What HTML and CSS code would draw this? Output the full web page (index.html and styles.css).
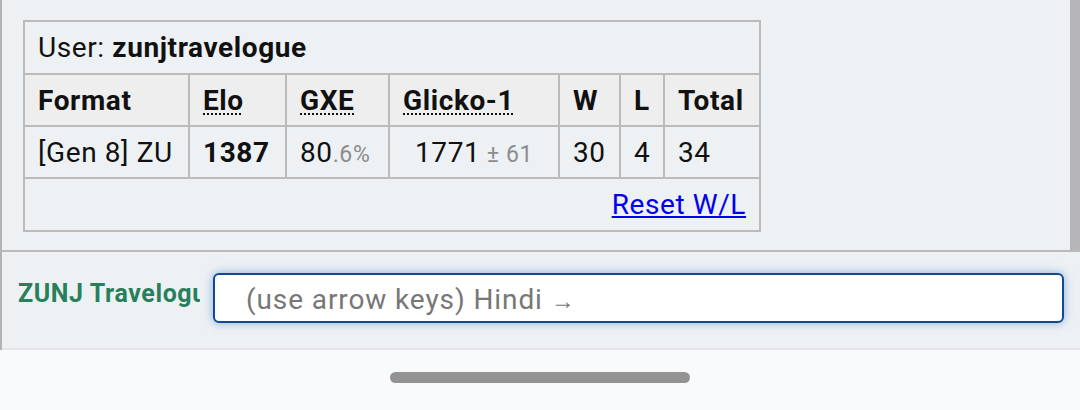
FILE: index.html
```html
<!DOCTYPE html>
<html lang="en">
  <head>
    <meta charset="UTF-8" />
    <meta name="viewport" content="width=device-width, initial-scale=1.0" />
    <title>Ladder</title>
    <link rel="stylesheet" href="styles.css">
  </head>
  <body>
    <div class="room">
      <div class="log">
        <div class="log-inner">
          <table class="ladder">
            <colgroup>
              <col class="c-format" />
              <col class="c-elo" />
              <col class="c-gxe" />
              <col class="c-glicko" />
              <col class="c-w" />
              <col class="c-l" />
              <col class="c-total" />
            </colgroup>
            <tr class="row-user">
              <td colspan="7">User: <strong>zunjtravelogue</strong></td>
            </tr>
            <tr class="row-head">
              <th>Format</th>
              <th><abbr title="Elo rating">Elo</abbr></th>
              <th><abbr title="user's percentage chance of winning a random battle (aka GLIXARE)">GXE</abbr></th>
              <th><abbr title="Glicko-1 rating: rating ± deviation">Glicko-1</abbr></th>
              <th>W</th>
              <th>L</th>
              <th>Total</th>
            </tr>
            <tr class="row-data">
              <td>[Gen 8] ZU</td>
              <td><strong>1387</strong></td>
              <td>80<small>.6%</small></td>
              <td class="center">1771<small> ± 61</small></td>
              <td>30</td>
              <td>4</td>
              <td>34</td>
            </tr>
            <tr class="row-reset">
              <td colspan="7" class="right"><a href="#">Reset W/L</a></td>
            </tr>
          </table>
        </div>
        <div class="scrollbar"></div>
      </div>
      <div class="chatbox">
        <div class="name">ZUNJ Travelogue</div>
        <div class="textbox">
          <span class="hint">(use arrow keys) Hindi <small>→</small></span>
        </div>
      </div>
    </div>
    <div class="navbar">
      <div class="pill"></div>
    </div>
  </body>
</html>
```

FILE: styles.css
```css
body {
  margin: 0;
  background-color: #f9fafc;
  font-family: Roboto, "Noto Sans", Arial, sans-serif;
  color: #111;
}

.room {
  border-left: 2px solid #b3b3b3;
  background-color: #edf1f4;
}

.log {
  display: flex;
  height: 250px;
  border-bottom: 2px solid #bababa;
}

.log-inner {
  flex: 1;
  padding: 20px 0 0 21px;
  overflow: hidden;
}

.scrollbar {
  width: 10px;
  background-color: #b6b6b8;
}

.ladder {
  border-collapse: collapse;
  table-layout: fixed;
  width: 736px;
  font-size: 28px;
  letter-spacing: 0.6px;
}

.c-format { width: 165px; }
.c-elo { width: 97px; }
.c-gxe { width: 103px; }
.c-glicko { width: 170px; }
.c-w { width: 61px; }
.c-l { width: 44px; }
.c-total { width: 96px; }

.ladder td,
.ladder th {
  border: 2px solid #bbb;
  padding: 0 13px;
  text-align: left;
  white-space: nowrap;
}

.ladder th {
  background-color: #eee;
  font-weight: bold;
}

.ladder abbr {
  text-decoration: underline dotted;
  text-decoration-thickness: 2px;
  text-underline-offset: 4px;
}

.ladder small {
  font-size: 23px;
  color: #8c8c8c;
}

.row-user { height: 53px; }
.row-head { height: 52px; }
.row-data { height: 52px; }
.row-reset { height: 53px; }

.ladder .center {
  text-align: center;
}

.ladder .right {
  text-align: right;
}

.ladder a {
  color: #0000ee;
}

.chatbox {
  display: flex;
  height: 98px;
  padding: 21px 16px 0 16px;
  box-sizing: border-box;
  border-bottom: 2px solid #e1e5ea;
}

.name {
  width: 182px;
  margin-right: 13px;
  padding-top: 6px;
  overflow: hidden;
  white-space: nowrap;
  font-size: 25px;
  font-weight: bold;
  letter-spacing: 0.6px;
  color: #27805b;
}

.textbox {
  flex: 1;
  height: 50px;
  box-sizing: border-box;
  border: 2px solid #124a92;
  border-radius: 6px;
  background-color: #fff;
  box-shadow: 0 0 10px rgba(40, 110, 200, 0.5);
  padding: 2px 0 0 31px;
  display: flex;
  align-items: center;
}

.hint {
  font-size: 28px;
  letter-spacing: 0.9px;
  color: #777;
}

.hint small {
  font-size: 24px;
}

.navbar {
  height: 58px;
  display: flex;
  justify-content: center;
  padding-top: 22px;
  box-sizing: border-box;
}

.pill {
  width: 300px;
  height: 11px;
  border-radius: 6px;
  background-color: #939393;
}
```
